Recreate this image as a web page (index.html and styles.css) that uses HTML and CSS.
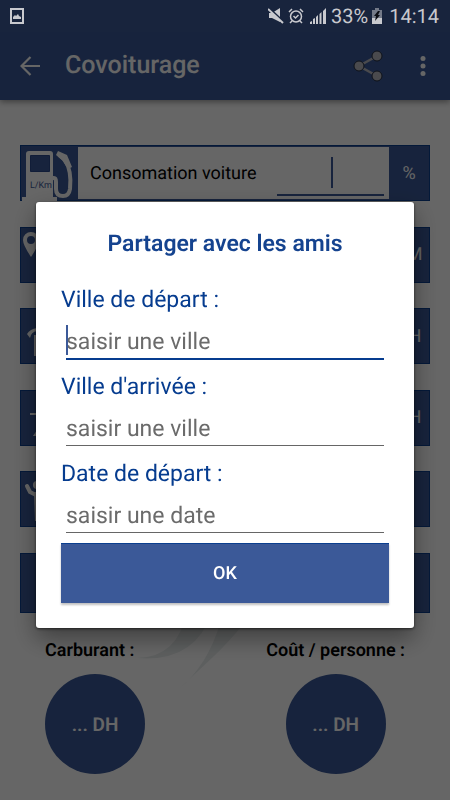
FILE: index.html
```html
<!DOCTYPE html>
<html lang="fr">
<head>
<meta charset="utf-8">
<meta name="viewport" content="width=device-width, initial-scale=1">
<title>Covoiturage</title>
<link rel="stylesheet" href="styles.css">
</head>
<body>
<div class="status">
  <svg class="status-photo" width="16" height="16" viewBox="0 0 16 16"><path fill="none" stroke="currentColor" stroke-width="2" d="M2 1h12v14H2z"/><path fill="currentColor" d="M4 11V9l2-2 1 1 2-2 1 2 2 1v2z"/></svg>
  <div class="status-right">
    <svg width="16" height="16" viewBox="0 0 16 16"><path fill="currentColor" d="M1 5h3l8-5v14l-8-4H1z"/><path stroke="#18243d" stroke-width="2" d="M1 0l15 14"/><path stroke="currentColor" stroke-width="2" d="M0 1l15 14"/></svg>
    <svg class="alarm" width="16" height="16" viewBox="0 0 16 16" fill="none" stroke="currentColor" stroke-width="1.5"><circle cx="8" cy="8.500" r="5.500"/><path d="M1 4l3-3M15 4l-3-3M4 13l-2 2M12 13l2 2M5.500 8l2 2 3-3"/></svg>
    <svg class="signal" width="16" height="16" viewBox="0 0 16 16" fill="currentColor"><path d="M0 16v-2l2-1v3zM3 16v-5l2-1v6zM6 16V9l2-2v9zM9.500 16V6l2-2v12zM13 16V3l3-3v16z"/></svg>
    <span>33%</span>
    <svg class="battery" width="12" height="16" viewBox="0 0 12 16"><path fill="#747a88" d="M1 2h3V0h4v2h3v9H1z"/><path fill="currentColor" d="M1 10h10v6H1z"/><path fill="#0b0d13" d="M7 3L3 8h2l-1 5 5-6H7l2-4z"/></svg>
    <span class="clock">14:14</span>
  </div>
</div>
<header class="appbar">
  <button class="icon-btn" aria-label="Retour"><svg width="20" height="20" viewBox="0 0 20 20" fill="none" stroke="currentColor" stroke-width="2.200"><path d="M20 10H2M10.500 1L1.500 10l9 9"/></svg></button>
  <h1>Covoiturage</h1>
  <button class="icon-btn share" aria-label="Partager"><svg width="30" height="32" viewBox="0 0 30 32"><path stroke="currentColor" stroke-width="2.500" fill="none" d="M24 6L6 16l18 10"/><g fill="currentColor" stroke="#232c40" stroke-width="1"><circle cx="24" cy="6" r="5"/><circle cx="6" cy="16" r="5"/><circle cx="24" cy="26" r="5"/></g></svg></button>
  <button class="icon-btn" aria-label="Menu"><svg width="6" height="20" viewBox="0 0 6 20" fill="currentColor"><circle cx="3" cy="2.500" r="2.500"/><circle cx="3" cy="10" r="2.500"/><circle cx="3" cy="17.500" r="2.500"/></svg></button>
</header>
<main class="page">
  <svg class="watermark" width="110" height="80" viewBox="0 0 110 80" fill="#e9eeee"><path d="M-3 45Q38 44 46 0H72Q54 50 -3 45z"/><path d="M38 77Q68 52 80 10L106 8Q88 30 73 44T38 77z"/></svg>
  <div class="bars">
    <div class="bar">
      <svg class="pump" width="57" height="56" viewBox="0 0 57 56"><path fill="#fff" d="M5 51V8q0-3 3-3h21q3 0 3 3v43h4v5H1v-5z"/><path fill="#3b5998" stroke="#2b4a8c" d="M9.500 9.500h19v16h-19z"/><path fill="none" stroke="#fff" stroke-width="4" d="M32 32h1q2 0 2 4v7q0 7 7 7 6 0 7-7 2-18-5-29l-6-5"/><path fill="#fff" d="M35 9l2-4 9 4 5 12-4 2-6-9z"/><text class="pump-text" x="9" y="42">L/Km</text></svg>
      <label class="bar-body"><span>Consomation voiture</span><input class="rate" type="text"><span class="rate-caret"></span></label>
      <span class="unit">%</span>
    </div>
    <div class="bar"><svg class="bar-icon" width="57" height="56" viewBox="0 0 57 56"><path fill="#fff" fill-rule="evenodd" d="M10 5a8 8 0 0 1 8 8q0 5-8 17-8-12-8-17a8 8 0 0 1 8-8zm0 4a4 4 0 1 0 0 8 4 4 0 0 0 0-8z"/></svg><span class="unit">KM</span></div>
    <div class="bar"><svg class="bar-icon" width="57" height="56" viewBox="0 0 57 56"><path fill="#fff" d="M6 26q3-5 10-6v3q-6 1-7 7zM13 27h2v21h-2z"/></svg><span class="unit">DH</span></div>
    <div class="bar"><svg class="bar-icon" width="57" height="56" viewBox="0 0 57 56"><path fill="#fff" d="M9 23h8v2H9zM12 46l4-6v6z"/></svg><span class="unit">DH</span></div>
    <div class="bar"><svg class="bar-icon" width="57" height="56" viewBox="0 0 57 56"><path fill="none" stroke="#fff" stroke-width="4" stroke-linecap="round" d="M6 15l3 6 6 3"/><circle cx="16" cy="14" r="4" fill="#fff"/><path fill="#fff" d="M13 21h5v29h-4z"/></svg></div>
    <div class="bar bar-action"></div>
  </div>
  <div class="results">
    <div class="result"><h2>Carburant :</h2><div class="disc">... DH</div></div>
    <div class="result result-person"><h2>Coût / personne :</h2><div class="disc">... DH</div></div>
  </div>
</main>
<div class="overlay">
  <form class="dialog" role="dialog" aria-labelledby="dialog-title">
    <h2 class="dialog-title" id="dialog-title">Partager avec les amis</h2>
    <div class="fields">
      <div class="field active"><label for="from">Ville de départ :</label><input id="from" type="text" placeholder="saisir une ville"></div>
      <div class="field"><label for="to">Ville d'arrivée :</label><input id="to" type="text" placeholder="saisir une ville"></div>
      <div class="field"><label for="date">Date de départ :</label><input id="date" type="text" placeholder="saisir une date"></div>
    </div>
    <button class="ok" type="button">OK</button>
  </form>
</div>
</body>
</html>
```

FILE: styles.css
```css
* { box-sizing: border-box; }
body { margin: 0; min-height: 100vh; background: #fff; color: #000; font-family: Roboto, "Liberation Sans", sans-serif; text-rendering: geometricPrecision; }
button, input { font: inherit; text-rendering: inherit; border: 0; padding: 0; background: none; border-radius: 0; outline: 0; }
h1, h2 { margin: 0; font-weight: 500; }
svg { display: block; flex: none; }

.status { position: relative; z-index: 3; display: flex; align-items: center; justify-content: space-between; height: 32px; padding: 0 11px 0 9px; background: #18243d; color: #c8c9ce; font-size: 20px; }
.status-right { display: flex; align-items: center; }
.alarm { margin-left: 4px; }
.signal { margin: 0 5px 0 6px; }
.battery { margin: 0 6px 0 3px; }

.appbar { position: relative; display: flex; align-items: center; height: 68px; padding: 0 24px 0 20px; background: #3b5998; color: #fff; box-shadow: 0 2px 6px rgba(0, 0, 0, .4); }
.appbar h1 { flex: 1; margin-left: 25px; font-size: 25px; line-height: 32px; }
.icon-btn { color: inherit; }
.share { margin-right: 37px; color: #b8b8c0; }

.page { position: relative; padding: 45px 20px 0; }
.watermark { position: absolute; left: 140px; top: 513px; overflow: visible; }
.bars { display: flex; flex-direction: column; justify-content: space-between; min-height: 468px; }
.bar { position: relative; display: flex; align-items: center; justify-content: space-between; height: 56px; background: #3b5998; border: 1px solid #0b3f8f; }
.bar-action { height: 60px; }
.pump { align-self: flex-start; }
.pump-text { fill: #3b5998; font-size: 9px; }
.bar-body { position: relative; flex: 1; display: flex; align-items: center; align-self: stretch; margin: 1px 0; padding: 0 5px 0 12px; background: #fff; font-size: 18px; }
.rate { width: 107px; height: 46px; margin-left: auto; border-bottom: 2px solid #3b5998; text-align: center; }
.rate-caret { position: absolute; right: 56px; top: 10px; width: 2px; height: 31px; background: #3b5998; }
.unit { width: 40px; color: #fff; font-size: 18px; text-align: center; }

.results { position: relative; display: flex; justify-content: space-between; padding: 25px; }
.result h2 { font-size: 18px; line-height: 26px; margin-bottom: 10px; font-weight: 600; }
.result-person { display: flex; flex-direction: column; align-items: center; }
.disc { display: flex; align-items: center; justify-content: center; width: 100px; height: 100px; border-radius: 50%; background: #3b5998; color: #fff; font-size: 19px; font-weight: 600; }

.overlay { position: fixed; inset: 0; z-index: 2; display: flex; align-items: center; padding: 30px 36px 0; background: rgba(0, 0, 0, .6); }
.dialog { flex: 1; padding: 25px; background: #fff; border-radius: 3px; box-shadow: 0 10px 24px rgba(0, 0, 0, .4), 0 1px 3px rgba(0, 0, 0, .6); }
.dialog-title { margin-bottom: 25px; padding-top: 1px; color: #15438f; font-size: 23px; font-weight: 600; line-height: 32px; text-align: center; }
.fields { display: grid; gap: 12px; margin-bottom: 9px; }
.field { position: relative; display: flex; flex-direction: column; height: 75px; color: #063c8f; font-size: 23px; }
.field label { line-height: 29px; }
.field input { height: 45px; margin: 0 5px; padding-top: 10px; min-width: 0; border-bottom: 1px solid #666; color: #222; }
.field input::placeholder { color: #6b6b6b; opacity: 1; }
.field.active input { height: 46px; border-bottom: 2px solid #063c8f; }
.field.active::after { content: ""; position: absolute; left: 5px; top: 40px; width: 2px; height: 30px; background: #3b5998; }
.ok { display: block; width: 100%; height: 60px; background: #3b5998; border-top: 1px solid #0b3f8f; color: #fff; font-size: 18px; font-weight: 500; box-shadow: 0 2px 2px rgba(0, 0, 0, .25); }
```
